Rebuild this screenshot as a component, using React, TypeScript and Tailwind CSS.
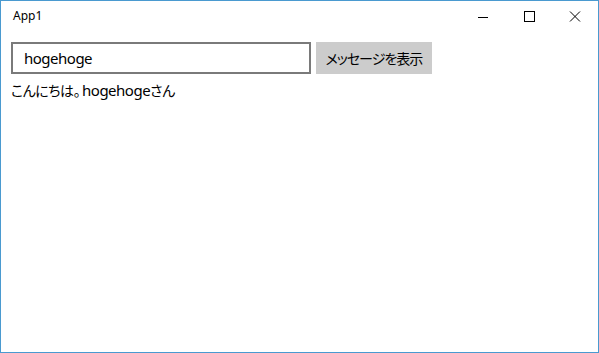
import React from "react";

export default function App() {
  const font = { fontFamily: '"Noto Sans", "Noto Sans CJK JP", sans-serif' };
  const jp = { fontFeatureSettings: '"palt"' };
  return (
    <div className="w-[599px] h-[353px] bg-white border border-[#4a9ad0] flex flex-col" style={font}>
      <div className="h-[31px] flex items-center justify-between shrink-0">
        <span className="pl-[12px] text-[12px] text-black leading-none -mt-[1px]">App1</span>
        <div className="flex h-full">
          <div className="w-[46px] h-full flex items-center justify-center">
            <svg width="12" height="12" viewBox="0 0 12 12"><path d="M1 6.5H11" stroke="#000" strokeWidth="1" /></svg>
          </div>
          <div className="w-[46px] h-full flex items-center justify-center">
            <svg width="12" height="12" viewBox="0 0 12 12"><rect x="1.5" y="0.5" width="10" height="10" fill="none" stroke="#000" strokeWidth="1" /></svg>
          </div>
          <div className="w-[46px] h-full flex items-center justify-center">
            <svg width="12" height="12" viewBox="0 0 12 12"><path d="M1 0.5L11 10.5M11 0.5L1 10.5" stroke="#000" strokeWidth="1" /></svg>
          </div>
        </div>
      </div>
      <div className="pl-[10px] pt-[10px] flex flex-col">
        <div className="flex gap-[5px]">
          <div className="w-[300px] h-[32px] border-2 border-[#7a7a7a] flex items-center pl-[11px] text-[15px] tracking-[-0.5px] text-black">
            hogehoge
          </div>
          <div className="w-[116px] h-[32px] bg-[#cccccc] flex items-center justify-center text-[14px] tracking-[-1px] text-black whitespace-nowrap" style={jp}>
            メッセージを表示
          </div>
        </div>
        <div className="text-[14px] text-black leading-[20px] mt-[6px] whitespace-nowrap" style={jp}>
          <span className="tracking-[-0.5px]">こんにちは。</span>
          <span className="text-[15px] tracking-[-0.5px] ml-[2px]">hogehoge</span>
          <span className="tracking-[-0.5px]">さん</span>
        </div>
      </div>
    </div>
  );
}
